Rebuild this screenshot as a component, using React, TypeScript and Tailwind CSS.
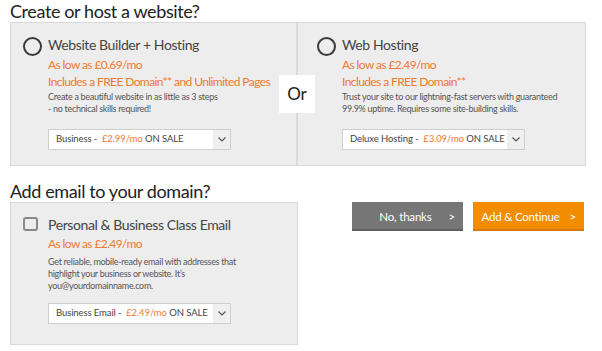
const orange = 'text-[#ef7a30]';

const Radio = () => (
  <span className="mt-[1px] block h-[19px] w-[19px] shrink-0 rounded-full border-2 border-[#3a3a3a]"></span>
);

const Checkbox = () => (
  <span className="mt-[1px] block h-[14px] w-[15px] shrink-0 rounded-[3px] border-2 border-[#8a8a8a]"></span>
);

const Select = ({ label, price }: { label: string; price: string }) => (
  <div className="flex h-[21px] w-[183px] border border-[#cfcfcf] bg-white text-[9.5px] tracking-[-0.1px] text-[#444]">
    <div className="flex flex-1 items-center whitespace-pre pl-[7px]">
      {label}
      <span className={orange}>{price}</span>
      <span> ON SALE</span>
    </div>
    <div className="flex w-[17px] items-center justify-center bg-[#efefef]">
      <svg width="8" height="5" viewBox="0 0 8 5" fill="none" stroke="#555" strokeWidth="1.2">
        <path d="M0.5 0.5 L4 4 L7.5 0.5" />
      </svg>
    </div>
  </div>
);

const heading = 'text-[14px] leading-[18px] tracking-[-0.4px] text-[#444]';
const offer = `text-[12px] leading-[17px] tracking-[-0.6px] ${orange}`;
const blurb = 'text-[9px] leading-[12px] tracking-[-0.3px] text-[#555]';

export default function App() {
  return (
    <div
      className="h-[351px] w-[602px] overflow-hidden whitespace-nowrap bg-white px-[10px] text-[#333]"
      style={{ fontFamily: 'Lato, "Noto Sans", sans-serif' }}
    >
      <h2 className="h-[22px] text-[18px] leading-[22px] tracking-[-0.4px] text-[#222]">Create or host a website?</h2>

      <div className="relative flex h-[144px] w-[576px] border border-[#d9d9d9] bg-[#eeeded]">
        <div className="flex w-[287px] gap-[6px] border-r-2 border-[#dadada] pl-[12px] pt-[13px]">
          <Radio />
          <div>
            <div className={heading}>Website Builder + Hosting</div>
            <div className={`mt-[2px] ${offer}`}>As low as £0.69/mo</div>
            <div className={offer}>Includes a FREE Domain** and Unlimited Pages</div>
            <p className={`mt-[1px] ${blurb}`}>
              Create a beautiful website in as little as 3 steps
              <br />- no technical skills required!
            </p>
            <div className="mt-[14px]">
              <Select label="Business -  " price="£2.99/mo" />
            </div>
          </div>
        </div>
        <div className="flex flex-1 gap-[6px] pl-[19px] pt-[13px]">
          <Radio />
          <div>
            <div className={heading}>Web Hosting</div>
            <div className={`mt-[2px] ${offer}`}>As low as £2.49/mo</div>
            <div className={offer}>Includes a FREE Domain**</div>
            <p className={`mt-[1px] ${blurb}`}>
              Trust your site to our lightning-fast servers with guaranteed
              <br />
              99.9% uptime. Requires some site-building skills.
            </p>
            <div className="mt-[14px]">
              <Select label="Deluxe Hosting -  " price="£3.09/mo" />
            </div>
          </div>
        </div>
        <div className="absolute left-[268px] top-[52px] flex h-[38px] w-[36px] items-center justify-center bg-white text-[17px] text-[#222]">
          Or
        </div>
      </div>

      <h2 className="mt-[14px] h-[22px] text-[18px] leading-[22px] tracking-[-0.4px] text-[#222]">Add email to your domain?</h2>

      <div className="flex items-start">
        <div className="flex h-[143px] w-[288px] gap-[10px] border border-[#d9d9d9] bg-[#eeeded] pl-[12px] pt-[13px]">
          <Checkbox />
          <div>
            <div className={heading}>Personal &amp; Business Class Email</div>
            <div className={`mt-[1px] ${offer}`}>As low as £2.49/mo</div>
            <p className={`mt-[4px] leading-[11.5px] ${blurb}`}>
              Get reliable, mobile-ready email with addresses that
              <br />
              highlight your business or website. It’s
              <br />
              you@yourdomainname.com.
            </p>
            <div className="mt-[11px]">
              <Select label="Business Email -  " price="£2.49/mo" />
            </div>
          </div>
        </div>

        <div className="ml-[54px] flex gap-[10px]">
          <button className="flex h-[29px] w-[111px] items-center justify-end gap-[17px] border-b-2 border-[#5f5f5f] bg-[#767676] pr-[8px] pt-[2px] text-[11.5px] tracking-[-0.2px] text-white">
            <span>No, thanks</span>
            <span>&gt;</span>
          </button>
          <button className="flex h-[29px] w-[111px] items-center justify-end gap-[10px] border-b-2 border-[#d9780a] bg-[#f28c00] pr-[8px] pt-[2px] text-[11.5px] tracking-[-0.2px] text-white">
            <span>Add &amp; Continue</span>
            <span>&gt;</span>
          </button>
        </div>
      </div>
    </div>
  );
}
